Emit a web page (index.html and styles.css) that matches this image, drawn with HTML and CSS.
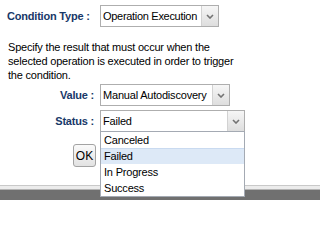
FILE: index.html
```html
<!DOCTYPE html>
<html>
<head>
<meta charset="utf-8">
<link rel="stylesheet" href="styles.css">
</head>
<body>
<div class="page">
  <div class="row cond">
    <span class="label">Condition Type :</span>
    <div class="select w1"><span class="val">Operation Execution</span><span class="btn"><svg width="8" height="5" viewBox="0 0 8 5"><polyline points="1,1 4,4 7,1" fill="none" stroke="#737373" stroke-width="1.6"/></svg></span></div>
  </div>
  <p class="desc">Specify the result that must occur when the selected operation is executed in order to trigger the condition.</p>
  <div class="row field">
    <span class="label">Value :</span>
    <div class="select w2"><span class="val">Manual Autodiscovery</span><span class="btn"><svg width="8" height="5" viewBox="0 0 8 5"><polyline points="1,1 4,4 7,1" fill="none" stroke="#737373" stroke-width="1.6"/></svg></span></div>
  </div>
  <div class="row field status">
    <span class="label">Status :</span>
    <div class="select w3 open"><span class="val">Failed</span><span class="btn"><svg width="8" height="5" viewBox="0 0 8 5"><polyline points="1,1 4,4 7,1" fill="none" stroke="#737373" stroke-width="1.6"/></svg></span>
      <ul class="list">
        <li>Canceled</li>
        <li class="hl">Failed</li>
        <li>In Progress</li>
        <li>Success</li>
      </ul>
    </div>
  </div>
  <div class="actions"><button class="ok">OK</button></div>
</div>
<div class="footer"></div>
</body>
</html>
```
FILE: styles.css
```css
html, body {
  margin: 0;
  padding: 0;
  background: #ffffff;
}
body {
  font-family: "Liberation Sans", Arial, sans-serif;
  font-size: 11px;
  letter-spacing: -0.2px;
  color: #000;
}
.page {
  padding-top: 5px;
}
.row {
  display: flex;
  align-items: center;
}
.label {
  box-sizing: border-box;
  width: 100px;
  font-weight: bold;
  color: #183868;
  font-size: 11px;
  white-space: nowrap;
}
.cond .label {
  padding-left: 7px;
}
.field .label {
  text-align: right;
  padding-right: 6px;
}
.select {
  position: relative;
  box-sizing: border-box;
  height: 22px;
  border: 1px solid #aeaeae;
  background: #fff;
  display: flex;
  align-items: center;
}
.w1 { width: 119px; }
.w2 { width: 130px; }
.w3 { width: 145px; }
.val {
  flex: 1;
  min-width: 0;
  padding-left: 2px;
  white-space: nowrap;
}
.w1 .val {
  letter-spacing: -0.3px;
}
.btn {
  box-sizing: border-box;
  flex: none;
  width: 17px;
  height: 20px;
  border-left: 1px solid #d2d2d2;
  background: linear-gradient(#f6f6f6, #dedede);
  display: flex;
  align-items: center;
  justify-content: center;
}
.btn svg { display: block; }
.desc {
  margin: 13px 0 0 8px;
  width: 232px;
  line-height: 14px;
}
.field {
  margin-top: 2px;
}
.field.status {
  margin-top: 4px;
}
.list {
  position: absolute;
  top: 100%;
  left: -1px;
  width: 145px;
  box-sizing: border-box;
  margin: 0;
  padding: 0;
  list-style: none;
  border: 1px solid #a4aab3;
  background: #fff;
}
.list li {
  height: 16px;
  line-height: 16px;
  padding-left: 3px;
}
.list li.hl {
  background: #dde9f7;
  box-shadow: inset 0 1px 0 #c9daf0;
}
.actions {
  margin-top: 12px;
  padding-left: 73px;
}
.ok {
  box-sizing: border-box;
  width: 23px;
  height: 23px;
  padding: 0;
  border: 1px solid #a3a3a3;
  border-radius: 3px;
  background: linear-gradient(#fafafa, #e2e2e2);
  font-family: "Liberation Sans", Arial, sans-serif;
  font-size: 12px;
  letter-spacing: 0;
  color: #000;
}
.footer {
  margin-top: 18px;
  height: 15px;
  background: linear-gradient(#c9c9c9 0, #c9c9c9 1px, #ececec 1px, #ececec 4px, #b4b4b4 4px, #b4b4b4 5px, #707070 5px);
}
```
